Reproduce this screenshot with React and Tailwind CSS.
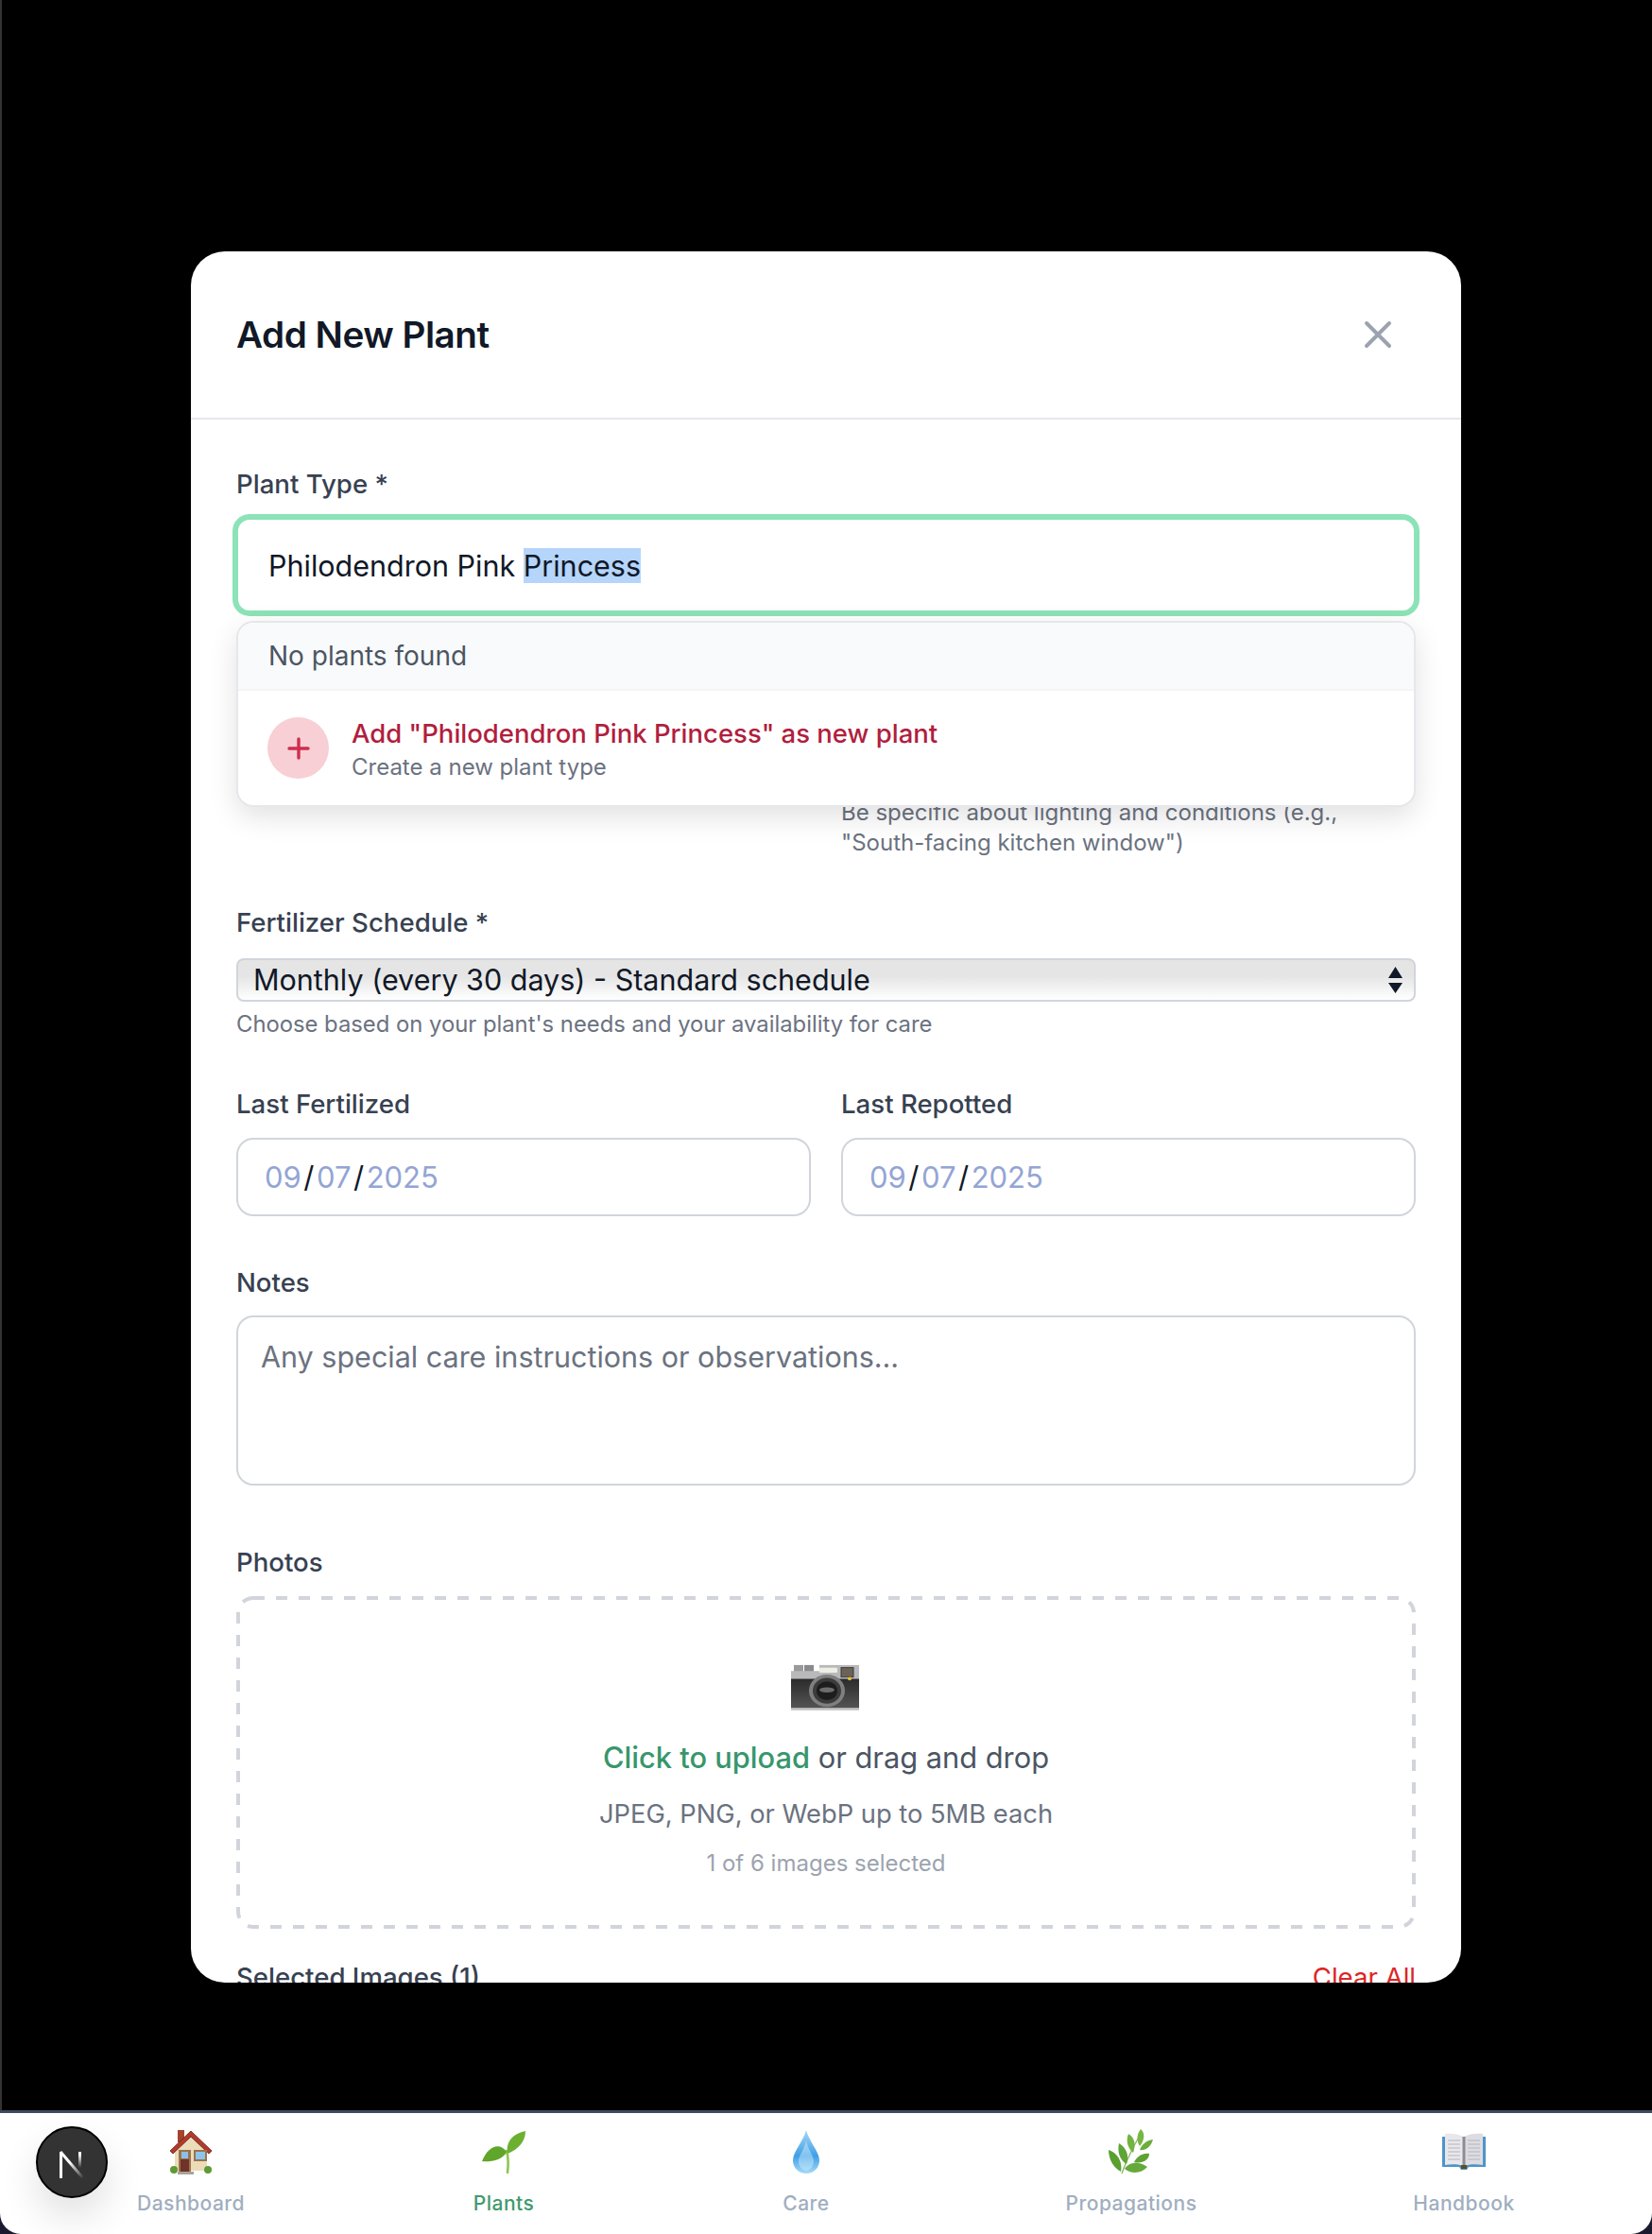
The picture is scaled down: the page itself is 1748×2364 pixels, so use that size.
import React from 'react';

const House = () => (
  <svg width="46" height="50" viewBox="0 0 46 50">
    <rect x="9" y="2" width="7" height="13" fill="#a5432f" />
    <path d="M6 24 L23 6 L40 24 V45 H6 Z" fill="#ecdcb9" />
    <path d="M1 24 L23 3 L45 24 L42 27 L23 9 L4 27 Z" fill="#b23a2c" stroke="#5c1f18" strokeWidth="0.8" />
    <rect x="10" y="23" width="13" height="23" fill="#9b7350" />
    <rect x="12" y="33" width="9" height="13" fill="#6f3327" />
    <rect x="13" y="25" width="7" height="7" fill="#8cc0e6" />
    <rect x="26" y="23" width="14" height="12" fill="#9b7350" />
    <rect x="28" y="25" width="10" height="8" fill="#8fc4ea" />
    <circle cx="5" cy="44" r="4" fill="#5f9a35" />
    <circle cx="41" cy="44" r="4" fill="#5f9a35" />
    <rect x="9" y="46" width="17" height="3" fill="#a9a39a" />
  </svg>
);

const Seedling = () => (
  <svg width="48" height="46" viewBox="0 0 48 46">
    <path d="M28 45 C29 36 29 28 27 22" fill="none" stroke="#8cc652" strokeWidth="2.6" strokeLinecap="round" />
    <path d="M28 25 C26 14 32 4 47 1 C47 12 40 20 28 25 Z" fill="#6cb032" />
    <path d="M27 23 C20 13 8 16 1 33 C10 34 23 32 27 23 Z" fill="#5fa62b" />
  </svg>
);

const Droplet = () => (
  <svg width="30" height="48" viewBox="0 0 30 48">
    <defs>
      <linearGradient id="drop" x1="0" y1="0" x2="0" y2="1">
        <stop offset="0" stopColor="#a8d8f5" />
        <stop offset="0.6" stopColor="#3f9fe6" />
        <stop offset="1" stopColor="#a6dbf9" />
      </linearGradient>
    </defs>
    <path d="M15 1 C18 13 29 24 29 33 C29 41 23 47 15 47 C7 47 1 41 1 33 C1 24 12 13 15 1 Z" fill="url(#drop)" />
    <path d="M15 12 C17 22 23 28 23 34 C23 39 20 43 15 44 C10 43 7 39 7 34 C7 28 13 22 15 12 Z" fill="#d8f0fd" opacity="0.45" />
  </svg>
);

const Herb = () => (
  <svg width="48" height="48" viewBox="0 0 48 48">
    <path d="M14 47 C19 33 25 20 35 3" fill="none" stroke="#8bb96a" strokeWidth="1.4" />
    <path d="M34 0 C39 4 38 12 33 18 C29 12 30 5 34 0 Z" fill="#76b742" />
    <path d="M47 11 C45 18 40 23 33 22 C35 16 40 12 47 11 Z" fill="#6bae3c" />
    <path d="M21 5 C28 9 29 17 26 25 C20 20 18 12 21 5 Z" fill="#72b440" />
    <path d="M43 26 C43 33 35 37 27 35 C30 29 36 25 43 26 Z" fill="#5ea234" />
    <path d="M11 15 C19 20 22 28 19 37 C12 33 9 24 11 15 Z" fill="#5fa535" />
    <path d="M0 22 C9 25 15 34 13 45 C5 41 0 32 0 22 Z" fill="#5b9f30" />
    <path d="M17 42 C22 34 33 34 41 40 C35 47 24 48 17 42 Z" fill="#65a93a" />
  </svg>
);

const Book = () => (
  <svg width="48" height="40" viewBox="0 0 48 40">
    <path d="M1 4 H47 V36 H29 L27 39 H21 L19 36 H1 Z" fill="#4f94c8" />
    <path d="M4 1 C11 0 18 1 24 4 V35 C18 33 11 33 4 34 Z" fill="#e8e8ec" />
    <path d="M44 1 C37 0 30 1 24 4 V35 C30 33 37 33 44 34 Z" fill="#dcdce2" />
    <path d="M7 8 H20 M7 12 H20 M7 16 H20 M7 20 H20 M7 24 H20 M7 28 H20 M28 8 H41 M28 12 H41 M28 16 H41 M28 20 H41 M28 24 H41 M28 28 H41" stroke="#b4b4bc" strokeWidth="1" />
    <rect x="22.5" y="4" width="3" height="31" fill="#8c8c94" />
    <rect x="21" y="34" width="6" height="4" fill="#5f5020" />
  </svg>
);

const Camera = () => (
  <svg className="ml-[-3px]" width="72" height="49" viewBox="0 0 72 54" preserveAspectRatio="none">
    <defs>
      <linearGradient id="body" x1="0" y1="0" x2="0" y2="1">
        <stop offset="0" stopColor="#2b2b2b" />
        <stop offset="1" stopColor="#555" />
      </linearGradient>
    </defs>
    <rect x="3" y="1" width="10" height="8" fill="#9a9a9a" />
    <rect x="14" y="1" width="10" height="8" fill="#8a8a8a" />
    <rect x="0" y="8" width="72" height="9" fill="#b9b9bb" />
    <rect x="30" y="1" width="42" height="8" fill="#b9b9bb" />
    <rect x="0" y="17" width="72" height="35" fill="url(#body)" />
    <rect x="0" y="51" width="72" height="3" fill="#c9c9c9" />
    <rect x="30" y="4" width="19" height="6" rx="1" fill="#efeee4" />
    <rect x="53" y="4" width="13" height="11" fill="#6b6258" stroke="#3a3a3a" />
    <circle cx="62" cy="17" r="2" fill="#e6c12e" />
    <circle cx="38" cy="31" r="19" fill="#7f7f7f" />
    <circle cx="38" cy="31" r="15" fill="#3c3c3c" />
    <circle cx="38" cy="31" r="11" fill="#1d1d1d" />
    <ellipse cx="38" cy="30" rx="8" ry="3" fill="#6d6d6d" />
  </svg>
);

const NavItem = ({ icon, label, active, className }) => (
  <div className={`flex flex-col items-center ${className}`}>
    <div className="flex h-[50px] items-center justify-center">{icon}</div>
    <span className={`mt-[17px] text-[21px] leading-[26px] font-medium tracking-[0.5px] whitespace-nowrap ${active ? 'text-[#3f9a6e]' : 'text-[#a0aec0]'}`}>
      {label}
    </span>
  </div>
);

const Label = ({ children }) => (
  <label className="block text-[27.6px] leading-[36px] font-medium text-[#374151]">{children}</label>
);

const DateField = ({ label }) => (
  <div>
    <Label>{label}</Label>
    <div className="mt-[18px] flex h-[83px] items-center rounded-[18px] border-2 border-[#d1d5db] pt-[2px] pl-[28px] text-[31px] text-[#93a5d4]">
      <span>09</span><span className="mx-[2.5px] text-[#111827]">/</span><span>07</span><span className="mx-[2.5px] text-[#111827]">/</span><span>2025</span>
    </div>
  </div>
);

export default function App() {
  return (
    <div className="flex h-[2364px] w-[1748px] flex-col bg-[#1a1a2e] font-['Inter',sans-serif]">
      <main className="flex flex-1 border-l-2 border-[#333] bg-black pt-[266px] pl-[200px]">
        <div className="h-[1832px] w-[1344px] overflow-hidden rounded-[36px] bg-white">
          <header className="flex h-[178px] items-center justify-between border-b-2 border-[#e5e7eb] pr-[72px] pl-[48px]">
            <h2 className="text-[38.7px] font-semibold tracking-[-0.5px] text-[#111827]">Add New Plant</h2>
            <svg width="32" height="32" viewBox="0 0 32 32" fill="none" stroke="#9ca3af" strokeWidth="4" strokeLinecap="round">
              <path d="M4 4 L28 28 M28 4 L4 28" />
            </svg>
          </header>

          <div className="px-[48px] pt-[50px]">
            <div className="relative">
              <Label>Plant Type *</Label>
              <div className="mx-[-4px] mt-[14px] flex h-[108px] items-center rounded-[18px] border-[6px] border-[#8ce3b8] pt-[2px] pl-[32px] text-[30.5px] text-[#111827]">
                <span>Philodendron Pink <span className="bg-[#b5d5fb]">Princess</span></span>
              </div>
              <div className="absolute top-[163px] right-0 left-0 z-10 overflow-hidden rounded-[18px] border-2 border-[#e5e7eb] bg-white shadow-[0_10px_30px_rgba(0,0,0,0.12)]">
                <div className="flex h-[72px] items-center border-b-2 border-[#f3f4f6] bg-[#f9fafb] pl-[32px] text-[28px] text-[#4b5563]">
                  No plants found
                </div>
                <div className="flex h-[121px] items-center pl-[31px]">
                  <div className="flex h-[65px] w-[65px] items-center justify-center rounded-full bg-[#f7cfd5]">
                    <svg width="24" height="24" viewBox="0 0 24 24" stroke="#cf2e4f" strokeWidth="3.4" strokeLinecap="round">
                      <path d="M12 2 V22 M2 12 H22" />
                    </svg>
                  </div>
                  <div className="mt-[3px] ml-[24px]">
                    <div className="text-[27.5px] leading-[36px] font-medium text-[#b11e3e]">Add "Philodendron Pink Princess" as new plant</div>
                    <div className="mt-[2px] text-[24px] leading-[32px] text-[#6b7280]">Create a new plant type</div>
                  </div>
                </div>
              </div>
            </div>

            <div className="mt-[192px] ml-[640px] w-[560px] text-[24px] leading-[32px] text-[#6b7280]">
              Be specific about lighting and conditions (e.g., "South-facing kitchen window")
            </div>

            <div className="mt-[50px]">
              <Label>Fertilizer Schedule *</Label>
              <div className="relative mt-[20px] flex h-[46px] items-center rounded-[8px] border-2 border-[#d1d5db] bg-gradient-to-b from-[#e5e5e5] from-40% to-white pl-[16px] text-[30.5px] text-[#111827]">
                Monthly (every 30 days) - Standard schedule
                <svg className="absolute top-[7px] right-[12px]" width="15" height="28" viewBox="0 0 15 28" fill="#111827">
                  <path d="M7.5 0 L15 12 H0 Z M7.5 28 L15 17 H0 Z" />
                </svg>
              </div>
              <p className="mt-[8px] text-[23.8px] leading-[32px] text-[#6b7280]">Choose based on your plant's needs and your availability for care</p>
            </div>

            <div className="mt-[50px] grid grid-cols-2 gap-[32px]">
              <DateField label="Last Fertilized" />
              <DateField label="Last Repotted" />
            </div>

            <div className="mt-[52px]">
              <Label>Notes</Label>
              <div className="mt-[17px] h-[180px] rounded-[18px] border-2 border-[#d1d5db] pt-[22px] pl-[24px] text-[30.5px] leading-[40px] text-[#6b7280]">
                Any special care instructions or observations...
              </div>
            </div>

            <div className="mt-[63px]">
              <Label>Photos</Label>
              <div className="relative mt-[18px] flex h-[352px] flex-col items-center pt-[72px]">
                <svg className="absolute inset-0" width="1248" height="352" fill="none">
                  <rect x="2" y="2" width="1244" height="348" rx="16" stroke="#d1d5db" strokeWidth="4" strokeDasharray="12 12" />
                </svg>
                <Camera />
                <p className="mt-[30px] text-[30.8px] leading-[40px] text-[#4b5563]"><span className="font-medium text-[#38966b]">Click to upload</span> or drag and drop</p>
                <p className="mt-[22px] text-[27.3px] leading-[36px] text-[#6b7280]">JPEG, PNG, or WebP up to 5MB each</p>
                <p className="mt-[18px] text-[24px] leading-[32px] text-[#9ca3af]">1 of 6 images selected</p>
              </div>
            </div>

            <div className="mt-[33px] flex items-center justify-between text-[27.6px] leading-[36px]">
              <span className="font-medium text-[#374151]">Selected Images (1)</span>
              <span className="text-[#dc2626]">Clear All</span>
            </div>
          </div>
        </div>
      </main>

      <nav className="relative flex h-[131px] shrink-0 items-start rounded-b-[22px] border-t-[3px] border-[#3f4a60] bg-white pt-[16px]">
        <div className="absolute top-[14px] left-[38px] flex h-[76px] w-[76px] items-center justify-center rounded-full border-2 border-black bg-[#333] shadow-[0_20px_40px_rgba(0,0,0,0.12)]">
          <svg className="mt-[6px]" width="28" height="30" viewBox="0 0 28 30" fill="none">
            <defs>
              <linearGradient id="nextDiag" gradientUnits="userSpaceOnUse" x1="8" y1="8" x2="26" y2="29">
                <stop offset="0.2" stopColor="#fff" />
                <stop offset="1" stopColor="#fff" stopOpacity="0" />
              </linearGradient>
              <linearGradient id="nextStem" gradientUnits="userSpaceOnUse" x1="22" y1="0" x2="22" y2="18">
                <stop offset="0.2" stopColor="#fff" />
                <stop offset="1" stopColor="#fff" stopOpacity="0" />
              </linearGradient>
            </defs>
            <rect x="1" y="1" width="3" height="28" fill="#fff" />
            <path d="M2 1 L26 29" stroke="url(#nextDiag)" strokeWidth="3" />
            <rect x="21" y="1" width="3" height="18" fill="url(#nextStem)" />
          </svg>
        </div>
        <NavItem icon={<House />} label="Dashboard" className="ml-[144px] w-[116px]" />
        <NavItem icon={<Seedling />} label="Plants" active className="ml-[240px] w-[66px]" />
        <NavItem icon={<Droplet />} label="Care" className="ml-[262px] w-[50px]" />
        <NavItem icon={<Herb />} label="Propagations" className="ml-[248px] w-[142px]" />
        <NavItem icon={<Book />} label="Handbook" className="ml-[226px] w-[110px]" />
      </nav>
    </div>
  );
}
